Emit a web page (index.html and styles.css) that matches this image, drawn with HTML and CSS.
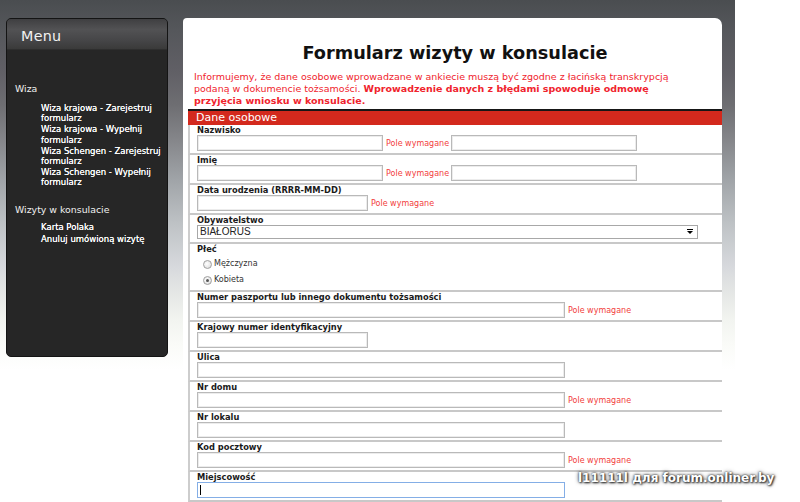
FILE: index.html
```html
<!DOCTYPE html>
<html lang="pl">
<head>
<meta charset="utf-8">
<title>Formularz wizyty w konsulacie</title>
<link rel="stylesheet" href="styles.css">
</head>
<body>
<div class="page">
  <aside class="menu">
    <div class="menu-head">Menu</div>
    <div class="menu-body">
      <div class="menu-title">Wiza</div>
      <ul class="menu-list">
        <li>Wiza krajowa - Zarejestruj<br>formularz</li>
        <li>Wiza krajowa - Wypełnij<br>formularz</li>
        <li>Wiza Schengen - Zarejestruj<br>formularz</li>
        <li>Wiza Schengen - Wypełnij<br>formularz</li>
      </ul>
      <div class="menu-title second">Wizyty w konsulacie</div>
      <ul class="menu-list short">
        <li>Karta Polaka</li>
        <li>Anuluj umówioną wizytę</li>
      </ul>
    </div>
  </aside>
  <main class="panel">
    <h1 class="title">Formularz wizyty w konsulacie</h1>
    <p class="info">Informujemy, że dane osobowe wprowadzane w ankiecie muszą być zgodne z łacińską transkrypcją<br>podaną w dokumencie tożsamości. <b>Wprowadzenie danych z błędami spowoduje odmowę</b><br><b>przyjęcia wniosku w konsulacie.</b></p>
    <div class="form">
      <div class="form-head">Dane osobowe</div>
      <div class="row">
        <div class="label">Nazwisko</div>
        <div class="line"><input class="inp w186" type="text"><span class="req">Pole wymagane</span><input class="inp w186" type="text"></div>
      </div>
      <div class="row">
        <div class="label">Imię</div>
        <div class="line"><input class="inp w186" type="text"><span class="req">Pole wymagane</span><input class="inp w186" type="text"></div>
      </div>
      <div class="row">
        <div class="label">Data urodzenia (RRRR-MM-DD)</div>
        <div class="line"><input class="inp w171" type="text"><span class="req">Pole wymagane</span></div>
      </div>
      <div class="row row-select">
        <div class="label">Obywatelstwo</div>
        <div class="select"><span class="select-text">BIAŁORUS</span><svg class="arrow" width="6" height="6" viewBox="0 0 6 6"><rect x="0" y="0" width="6" height="1" fill="#000"/><path d="M0 2 H6 L3 5 Z" fill="#000"/></svg></div>
      </div>
      <div class="row">
        <div class="label">Płeć</div>
        <div class="radio-line first"><span class="radio"></span><span class="radio-label">Mężczyzna</span></div>
        <div class="radio-line"><span class="radio checked"></span><span class="radio-label">Kobieta</span></div>
      </div>
      <div class="row">
        <div class="label">Numer paszportu lub innego dokumentu tożsamości</div>
        <div class="line"><input class="inp w368" type="text"><span class="req">Pole wymagane</span></div>
      </div>
      <div class="row">
        <div class="label">Krajowy numer identyfikacyjny</div>
        <div class="line"><input class="inp w171" type="text"></div>
      </div>
      <div class="row">
        <div class="label">Ulica</div>
        <div class="line"><input class="inp w368" type="text"></div>
      </div>
      <div class="row">
        <div class="label">Nr domu</div>
        <div class="line"><input class="inp w368" type="text"><span class="req">Pole wymagane</span></div>
      </div>
      <div class="row">
        <div class="label">Nr lokalu</div>
        <div class="line"><input class="inp w368" type="text"></div>
      </div>
      <div class="row">
        <div class="label">Kod pocztowy</div>
        <div class="line"><input class="inp w368" type="text"><span class="req">Pole wymagane</span></div>
      </div>
      <div class="row">
        <div class="label">Miejscowość</div>
        <div class="line"><div class="inp w368 focus"><span class="caret"></span></div></div>
      </div>
    </div>
  </main>
</div>
<div class="watermark">l11111l для forum.onliner.by</div>
</body>
</html>
```

FILE: styles.css
```css
html, body {
  margin: 0;
  padding: 0;
}
body {
  position: relative;
  width: 800px;
  height: 502px;
  overflow: hidden;
  background: #fff;
  font-family: "DejaVu Sans", Verdana, sans-serif;
}
.page {
  width: 735px;
  height: 502px;
  display: flex;
  align-items: flex-start;
  background: linear-gradient(#4a4d50 0px, #55575b 30px, #605f65 70px, #6e6e72 105px, #85868a 140px, #a0a4a8 180px, #bfc3c6 225px, #d6d8dc 265px, #e6e8e6 295px, #f2f4f0 320px, #fafbf8 345px, #ffffff 370px);
}

/* Menu */
.menu {
  margin: 18px 0 0 6px;
  width: 162px;
  height: 339px;
  box-sizing: border-box;
  border: 1px solid #141414;
  border-radius: 5px;
  background: #262626;
  overflow: hidden;
}
.menu-head {
  height: 31px;
  box-sizing: border-box;
  padding: 9px 0 0 14px;
  background: linear-gradient(#3f3f41, #525254 35%, #464648 70%, #3a3a3a);
  border-bottom: 1px solid #2e2e2e;
  color: #f2f2f2;
  font-size: 14.3px;
  line-height: 16px;
  letter-spacing: 0.3px;
}
.menu-body {
  padding: 33px 0 0 8px;
}
.menu-title {
  color: #f0f0f0;
  font-size: 9.4px;
  line-height: 12px;
}
.menu-title.second {
  margin-top: 16px;
}
.menu-list {
  list-style: none;
  margin: 8px 0 0 0;
  padding: 0 0 0 26px;
}
.menu-list.short {
  margin-top: 6px;
}
.menu-list li {
  color: #ffffff;
  font-size: 8.5px;
  line-height: 10.2px;
  margin-bottom: 1px;
  text-shadow: 0 0 0.4px #fff;
}
.menu-list.short li {
  margin-bottom: 2px;
}

/* Panel */
.panel {
  margin: 18px 0 0 15px;
  width: 539px;
  height: 484px;
  background: #fff;
  border-radius: 4px 7px 0 0;
}
.title {
  margin: 0;
  padding: 24px 0 0 5px;
  text-align: center;
  font-size: 17.7px;
  line-height: 22px;
  font-weight: bold;
  color: #111;
}
.info {
  margin: 7px 0 0 0;
  padding: 0 0 0 11px;
  font-size: 9.5px;
  line-height: 12px;
  color: #f0232d;
  white-space: nowrap;
}
.info b {
  font-weight: bold;
}

/* Form */
.form {
  margin: 2px 0 0 5px;
  width: 534px;
}
.form-head {
  border-top: 2px solid #161616;
  height: 14px;
  background: #d3291d;
  color: #fff;
  font-size: 11px;
  line-height: 14px;
  padding-left: 8px;
}
.row {
  border-left: 2px solid #cdcdcd;
  border-bottom: 2px solid #c8c8c8;
  padding: 0 0 2px 7px;
}
.row-select {
  padding-bottom: 3px;
}
.label {
  height: 10px;
  font-size: 8.3px;
  line-height: 10px;
  font-weight: bold;
  color: #1a1a1a;
  white-space: nowrap;
}
.line {
  display: flex;
  align-items: center;
  height: 16px;
}
.inp {
  box-sizing: border-box;
  height: 16px;
  margin: 0;
  padding: 0;
  border: 1px solid #b9b9b9;
  box-shadow: inset 0 0 0 1px #ececec;
  background: #fff;
  font: inherit;
}
.w186 { width: 186px; }
.w171 { width: 171px; }
.w368 { width: 368px; }
.focus {
  border-color: #84aee6;
  box-shadow: none;
  display: flex;
  align-items: center;
  padding-left: 2px;
}
.caret {
  width: 1px;
  height: 10px;
  background: #000;
}
.req {
  margin: 0 2px 0 3px;
  font-size: 8px;
  color: #f2403c;
  white-space: nowrap;
}
.select {
  box-sizing: border-box;
  width: 501px;
  height: 14px;
  border: 1px solid #a8a8a8;
  background: #fff;
  display: flex;
  align-items: center;
  justify-content: space-between;
  padding: 0 4px 0 2px;
}
.select-text {
  font-family: "Liberation Sans", Arial, sans-serif;
  font-size: 10px;
  line-height: 12px;
  color: #222;
}
.arrow {
  display: block;
}
.radio-line {
  display: flex;
  align-items: center;
  height: 16px;
  padding-left: 6px;
}
.radio-line.first {
  margin-top: 2px;
}
.radio {
  box-sizing: border-box;
  width: 9px;
  height: 9px;
  border-radius: 50%;
  border: 1px solid #a0a0a0;
  background: radial-gradient(circle at 40% 40%, #ffffff, #d8d8d8);
  margin-right: 2px;
  display: flex;
  align-items: center;
  justify-content: center;
}
.radio.checked::after {
  content: "";
  width: 3px;
  height: 3px;
  border-radius: 50%;
  background: #555;
}
.radio-label {
  font-size: 8px;
  line-height: 10px;
  color: #333;
}

/* Watermark overlay */
.watermark {
  position: absolute;
  left: 578px;
  top: 471px;
  font-family: "DejaVu Sans", Verdana, sans-serif;
  font-weight: bold;
  font-size: 12px;
  line-height: 14px;
  color: #fff;
  white-space: nowrap;
  text-shadow: 0 0 2px #222, 1px 1px 2px #333, 0 0 4px #555;
}
```
